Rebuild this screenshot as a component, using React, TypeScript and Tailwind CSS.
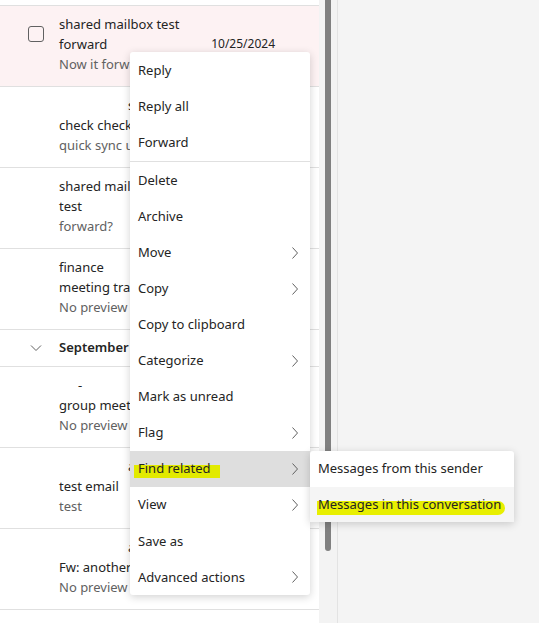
import React from "react";

type Row = {
  name: string;
  nameIndent?: string;
  subject: string;
  preview: string;
  date?: string;
  selected?: boolean;
};

const rowsTop: Row[] = [
  { name: "shared mailbox test", subject: "forward", preview: "Now it forwards", date: "10/25/2024", selected: true },
  { name: "sender", nameIndent: "pl-[69px]", subject: "check check", preview: "quick sync up" },
  { name: "shared mailbox test", subject: "test", preview: "forward?" },
  { name: "finance", subject: "meeting transcript", preview: "No preview" },
];

const rowsSept: Row[] = [
  { name: "-", nameIndent: "pl-[19px]", subject: "group meeting", preview: "No preview" },
  { name: "admin", nameIndent: "pl-[69px]", subject: "test email", preview: "test" },
  { name: "admin", nameIndent: "pl-[69px]", subject: "Fw: another test", preview: "No preview" },
];

const menu: { label: string; sub?: boolean; divider?: boolean; active?: boolean }[] = [
  { label: "Reply" },
  { label: "Reply all" },
  { label: "Forward", divider: true },
  { label: "Delete" },
  { label: "Archive" },
  { label: "Move", sub: true },
  { label: "Copy", sub: true },
  { label: "Copy to clipboard" },
  { label: "Categorize", sub: true },
  { label: "Mark as unread" },
  { label: "Flag", sub: true },
  { label: "Find related", sub: true, active: true },
  { label: "View", sub: true },
  { label: "Save as" },
  { label: "Advanced actions", sub: true },
];

const Chevron = () => (
  <svg width="8" height="14" viewBox="0 0 8 14" fill="none">
    <path d="M1.5 1.5 6.5 7l-5 5.5" stroke="#616161" strokeWidth="1" />
  </svg>
);

const MailRow = ({ row }: { row: Row }) => (
  <div
    className={`h-[81px] border-b border-[#e0e0e0] flex items-start pt-[8px] ${
      row.selected ? "bg-[#fdf2f3]" : "bg-white"
    }`}
  >
    <div className="w-[59px] shrink-0 flex justify-center pl-[12px] pt-[12px]">
      {row.selected && (
        <div className="w-[16px] h-[16px] border border-[#616161] rounded-[3px] bg-transparent" />
      )}
    </div>
    <div className="flex-1 pr-[44px] text-[13px] leading-[20px]">
      <div className={`text-[#242424] whitespace-nowrap ${row.nameIndent ?? ""}`}>{row.name}</div>
      <div className="flex justify-between text-[#242424] whitespace-nowrap">
        <span>{row.subject}</span>
        {row.date && <span className="text-[12px]">{row.date}</span>}
      </div>
      <div className="text-[#616161] whitespace-nowrap">{row.preview}</div>
    </div>
  </div>
);

export default function App() {
  return (
    <div
      className="relative w-[539px] h-[623px] overflow-hidden flex bg-[#f4f4f4]"
      style={{ fontFamily: '"Segoe UI", "Noto Sans", sans-serif' }}
    >
      <div className="w-[319px] shrink-0 bg-white">
        <div className="h-[6px] border-b border-[#e0e0e0]" />
        {rowsTop.map((r, i) => (
          <MailRow key={i} row={r} />
        ))}
        <div className="h-[37px] border-b border-[#e0e0e0] flex items-center">
          <div className="w-[59px] flex justify-center pl-[12px]">
            <svg width="12" height="8" viewBox="0 0 12 8" fill="none">
              <path d="M1 1.5 6 6.5l5-5" stroke="#616161" strokeWidth="1" />
            </svg>
          </div>
          <span className="text-[13px] font-semibold text-[#242424]">September</span>
        </div>
        {rowsSept.map((r, i) => (
          <MailRow key={i} row={r} />
        ))}
      </div>

      <div className="w-[18px] shrink-0 bg-[#f3f3f3] flex justify-center">
        <div className="w-[6px] h-[551px] bg-[#808080] rounded-b-[3px]" />
      </div>
      <div className="w-px bg-[#e3e3e3]" />
      <div className="flex-1 bg-[#f4f4f4]" />

      <div className="absolute left-[130px] top-[52px] w-[180px] bg-white rounded-[3px] shadow-[0_2px_8px_rgba(0,0,0,0.18)] text-[13px] text-[#242424] pt-px">
        {menu.map((m) => (
          <React.Fragment key={m.label}>
            <div
              className={`h-[36.1px] flex items-center justify-between pl-[8px] pr-[11px] ${
                m.active ? "bg-[#dedede]" : ""
              }`}
            >
              {m.active ? (
                <span className="relative">
                  <span className="absolute left-[-4px] right-[-9px] top-[6px] bottom-[1px] bg-[#e2ea00]" />
                  <span className="relative">{m.label}</span>
                </span>
              ) : (
                <span>{m.label}</span>
              )}
              {m.sub && <Chevron />}
            </div>
            {m.divider && <div className="h-px bg-[#e0e0e0]" />}
          </React.Fragment>
        ))}
      </div>

      <div className="absolute left-[310px] top-[451px] w-[204px] bg-white rounded-[3px] shadow-[0_2px_8px_rgba(0,0,0,0.18)] text-[13px] text-[#242424] whitespace-nowrap">
        <div className="h-[36px] flex items-center pl-[8px]">Messages from this sender</div>
        <div className="h-[35px] flex items-center pl-[8px] bg-[#f5f5f5]">
          <span className="relative">
            <span className="absolute left-[-1px] right-[-4px] top-[6px] bottom-[-1px] bg-[#e8ef00] rounded-r-full" />
            <span className="relative">Messages in this conversation</span>
          </span>
        </div>
      </div>
    </div>
  );
}
